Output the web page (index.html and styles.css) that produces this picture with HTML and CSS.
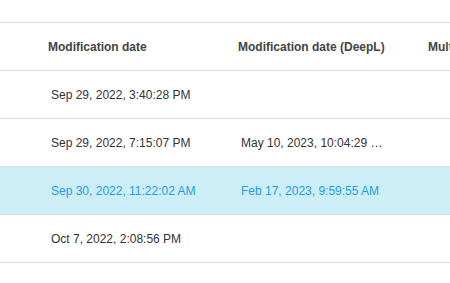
FILE: index.html
```html
<!DOCTYPE html>
<html lang="en">
<head>
  <meta charset="UTF-8">
  <title>Translations</title>
  <link rel="stylesheet" href="styles.css">
</head>
<body>

<div class="grid-wrap">
  <table class="grid">
    <thead>
      <tr>
        <th class="lead"></th>
        <th>Modification date</th>
        <th>Modification date (DeepL)</th>
        <th>Multilingual</th>
      </tr>
    </thead>
    <tbody>
      <tr>
        <td class="lead"></td>
        <td><span class="cell">Sep 29, 2022, 3:40:28 PM</span></td>
        <td><span class="cell"></span></td>
        <td></td>
      </tr>
      <tr>
        <td class="lead"></td>
        <td><span class="cell">Sep 29, 2022, 7:15:07 PM</span></td>
        <td><span class="cell">May 10, 2023, 10:04:29 PM</span></td>
        <td></td>
      </tr>
      <tr class="selected">
        <td class="lead"></td>
        <td><span class="cell">Sep 30, 2022, 11:22:02 AM</span></td>
        <td><span class="cell">Feb 17, 2023, 9:59:55 AM</span></td>
        <td></td>
      </tr>
      <tr>
        <td class="lead"></td>
        <td><span class="cell">Oct 7, 2022, 2:08:56 PM</span></td>
        <td><span class="cell"></span></td>
        <td></td>
      </tr>
    </tbody>
  </table>
</div>

</body>
</html>
```

FILE: styles.css
```css
body {
  font-family: "Liberation Sans", Arial, sans-serif;
  margin: 0;
  padding: 22px 0 0 0;
  background-color: #fff;
  overflow: hidden;
}

.grid-wrap {
  width: 100%;
  overflow: hidden;
}

.grid {
  border-collapse: collapse;
  table-layout: fixed;
  width: 600px;
  border-top: 1px solid #dcdcdc;
}

.grid th,
.grid td {
  width: 158px;
  height: 47px;
  padding: 0 16px;
  border-bottom: 1px solid #dcdcdc;
  text-align: left;
  white-space: nowrap;
  overflow: hidden;
  font-size: 12px;
}

.grid .lead {
  width: 32px;
  padding: 0;
}

.grid th {
  font-weight: bold;
  color: #444;
}

.grid td {
  color: #333;
}

.cell {
  display: block;
  padding-left: 3px;
  max-width: 145px;
  overflow: hidden;
  text-overflow: ellipsis;
}

.grid tr.selected td {
  background-color: #cdedf7;
  color: #1f9de6;
}
```
